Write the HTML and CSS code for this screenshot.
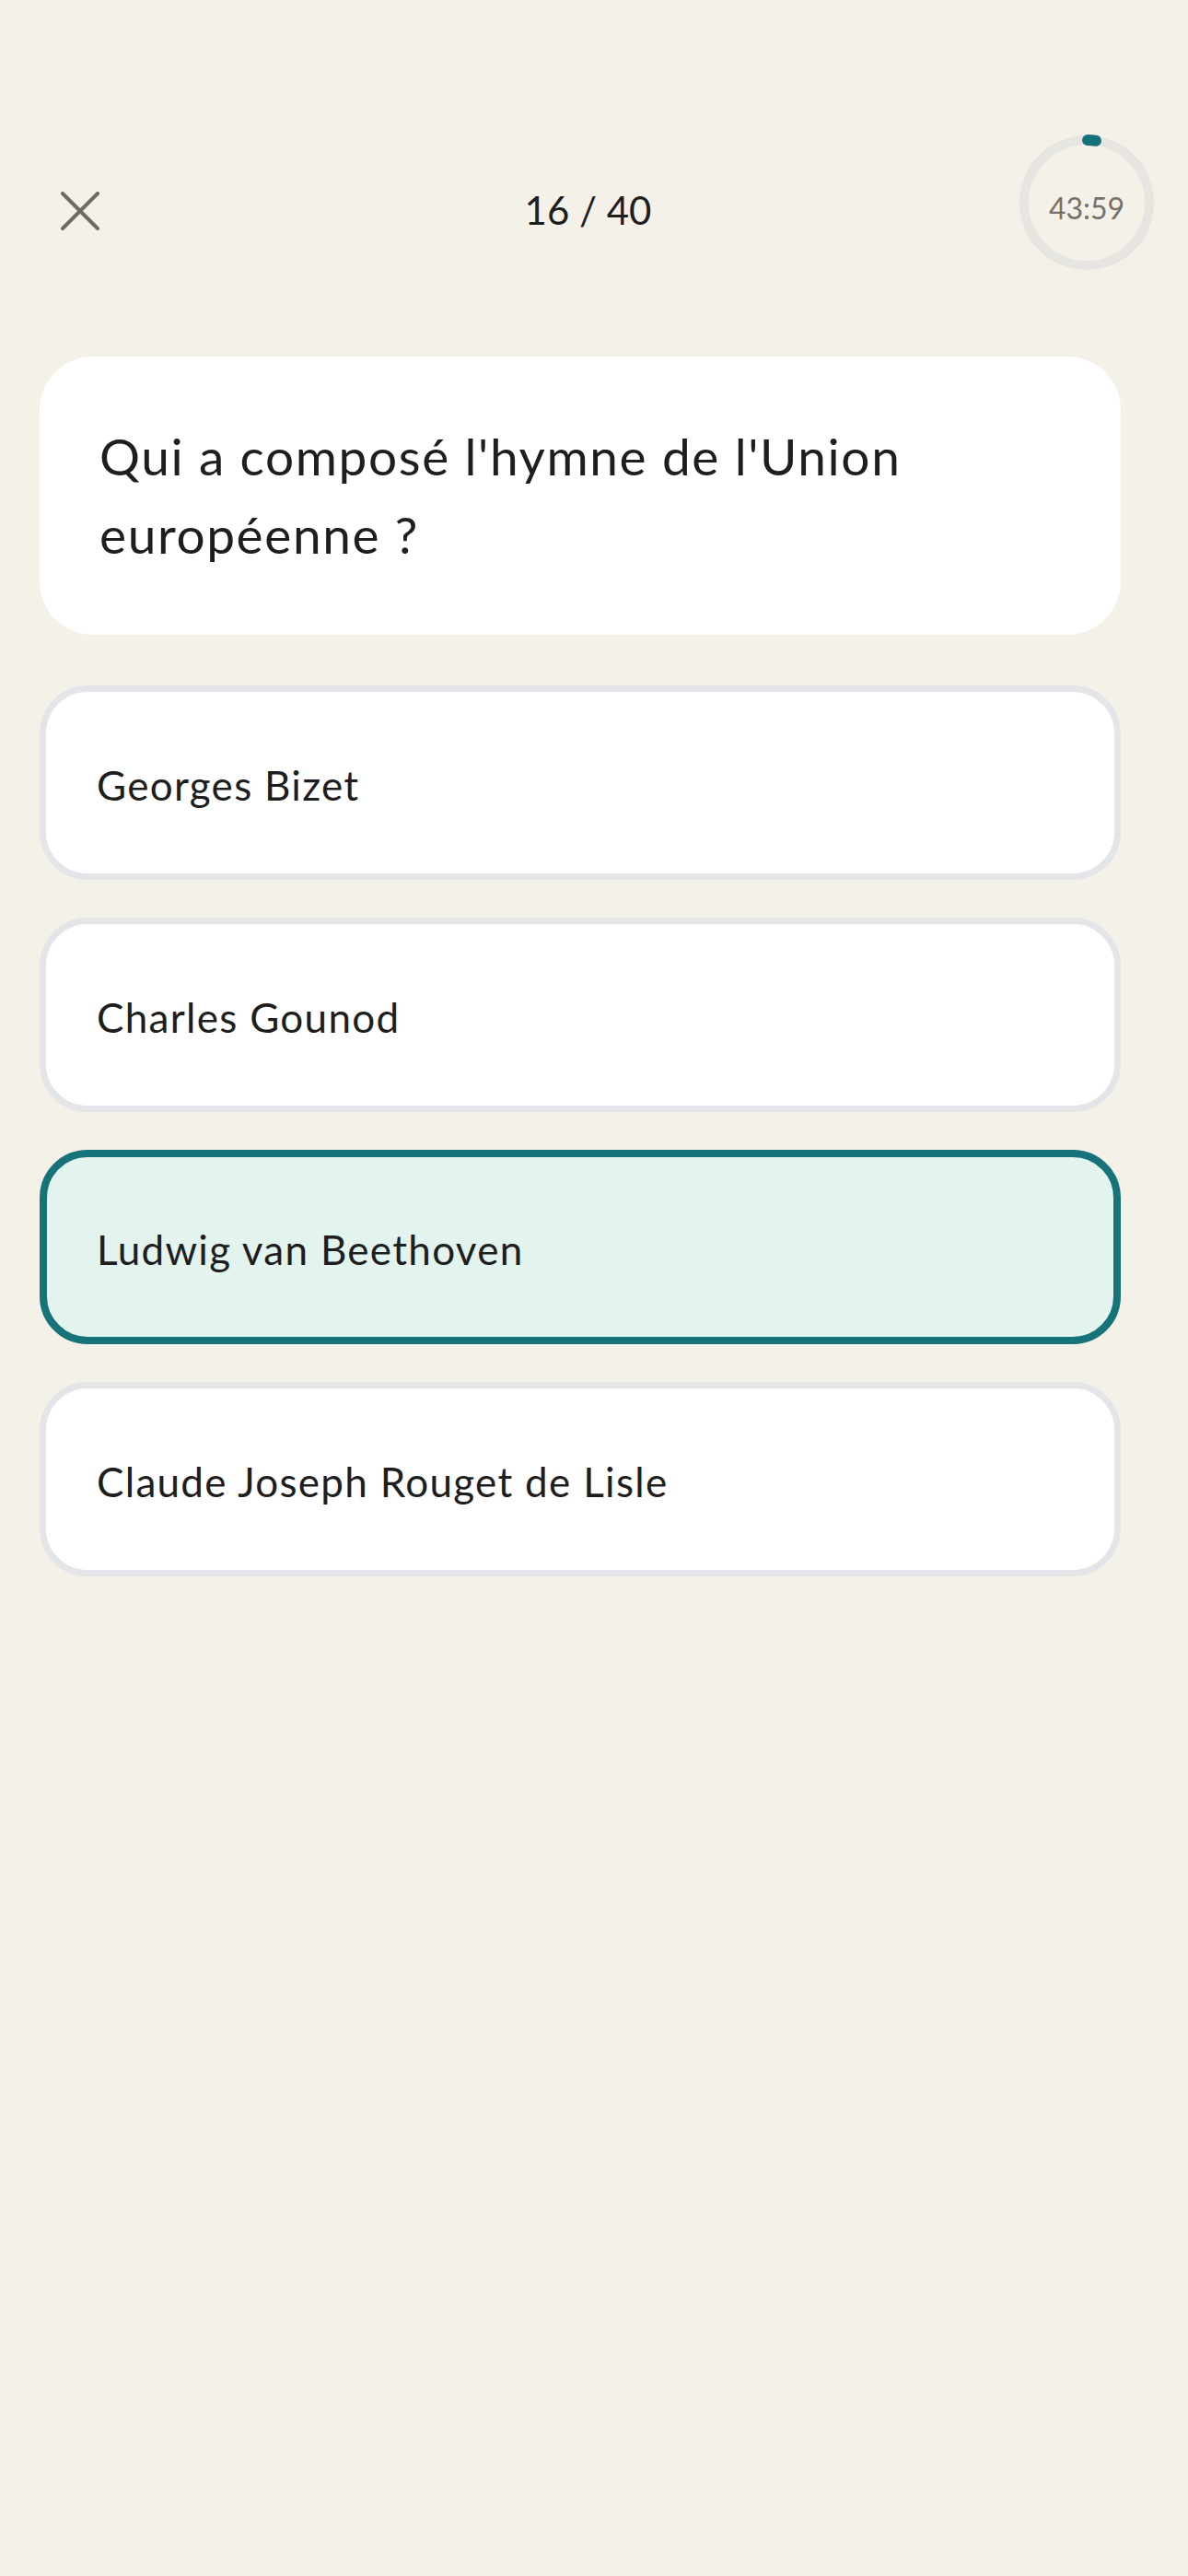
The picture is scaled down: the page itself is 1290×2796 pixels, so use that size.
FILE: index.html
```html
<!DOCTYPE html>
<html lang="fr">
<head>
<meta charset="utf-8">
<title>Quiz</title>
<link rel="stylesheet" href="styles.css">
</head>
<body>
<div class="screen">
  <header class="topbar">
    <button class="close" aria-label="Fermer">
      <svg width="42" height="42" viewBox="0 0 42 42"><path d="M2 2 L40 40 M40 2 L2 40" stroke="#6e6a65" stroke-width="4" stroke-linecap="round" fill="none"/></svg>
    </button>
    <div class="count">16 / 40</div>
    <div class="timer">
      <svg class="ring" width="150" height="150" viewBox="0 0 150 150">
        <circle cx="75" cy="75" r="68" stroke="#e7e5e1" stroke-width="10" fill="none"/>
        <path d="M76 7 A68 68 0 0 1 85 7.75" stroke="#137277" stroke-width="12" stroke-linecap="round" fill="none"/>
      </svg>
      <span class="time">43:59</span>
    </div>
  </header>

  <section class="question">
    <p>Qui a composé l'hymne de l'Union européenne ?</p>
  </section>

  <div class="options">
    <div class="option">Georges Bizet</div>
    <div class="option">Charles Gounod</div>
    <div class="option selected">Ludwig van Beethoven</div>
    <div class="option">Claude Joseph Rouget de Lisle</div>
  </div>
</div>
</body>
</html>
```

FILE: styles.css
```css
html, body {
  margin: 0;
  padding: 0;
  background: #f4f1e9;
}
body {
  font-family: "Lato", "Liberation Sans", sans-serif;
  color: #1e1e1e;
  min-height: 2796px;
}
.screen {
  padding: 145px 35px 0 43px;
}
.topbar {
  display: flex;
  align-items: center;
  justify-content: space-between;
  height: 150px;
}
.close {
  margin-top: 18px;
  margin-left: 23px;
  width: 42px;
  height: 42px;
  padding: 0;
  border: 0;
  background: none;
  display: flex;
}
.count {
  margin-top: 16px;
  margin-left: 64px;
  font-size: 42px;
  color: #1e1e1e;
}
.timer {
  position: relative;
  width: 150px;
  height: 150px;
  display: flex;
  align-items: center;
  justify-content: center;
}
.ring {
  position: absolute;
  left: 0;
  top: 0;
}
.time {
  position: relative;
  padding-top: 10px;
  font-size: 32px;
  color: #75706b;
}
.question {
  margin: 92px 38px 0 0;
  background: #ffffff;
  border-radius: 58px;
  padding: 66px 40px 66px 65px;
}
.question p {
  margin: 0;
  font-size: 55px;
  line-height: 85px;
  letter-spacing: 1.6px;
  color: #1e1e1e;
}
.options {
  margin: 55px 38px 0 0;
  display: flex;
  flex-direction: column;
  gap: 41px;
}
.option {
  box-sizing: border-box;
  height: 211px;
  display: flex;
  align-items: center;
  padding: 4px 0 0 55px;
  background: #ffffff;
  border: 7px solid #e4e5e8;
  border-radius: 52px;
  font-size: 44px;
  letter-spacing: 1.3px;
  color: #1e1e1e;
}
.option.selected {
  background: #e3f3ee;
  border: 8px solid #17737a;
  padding-left: 54px;
}
```
